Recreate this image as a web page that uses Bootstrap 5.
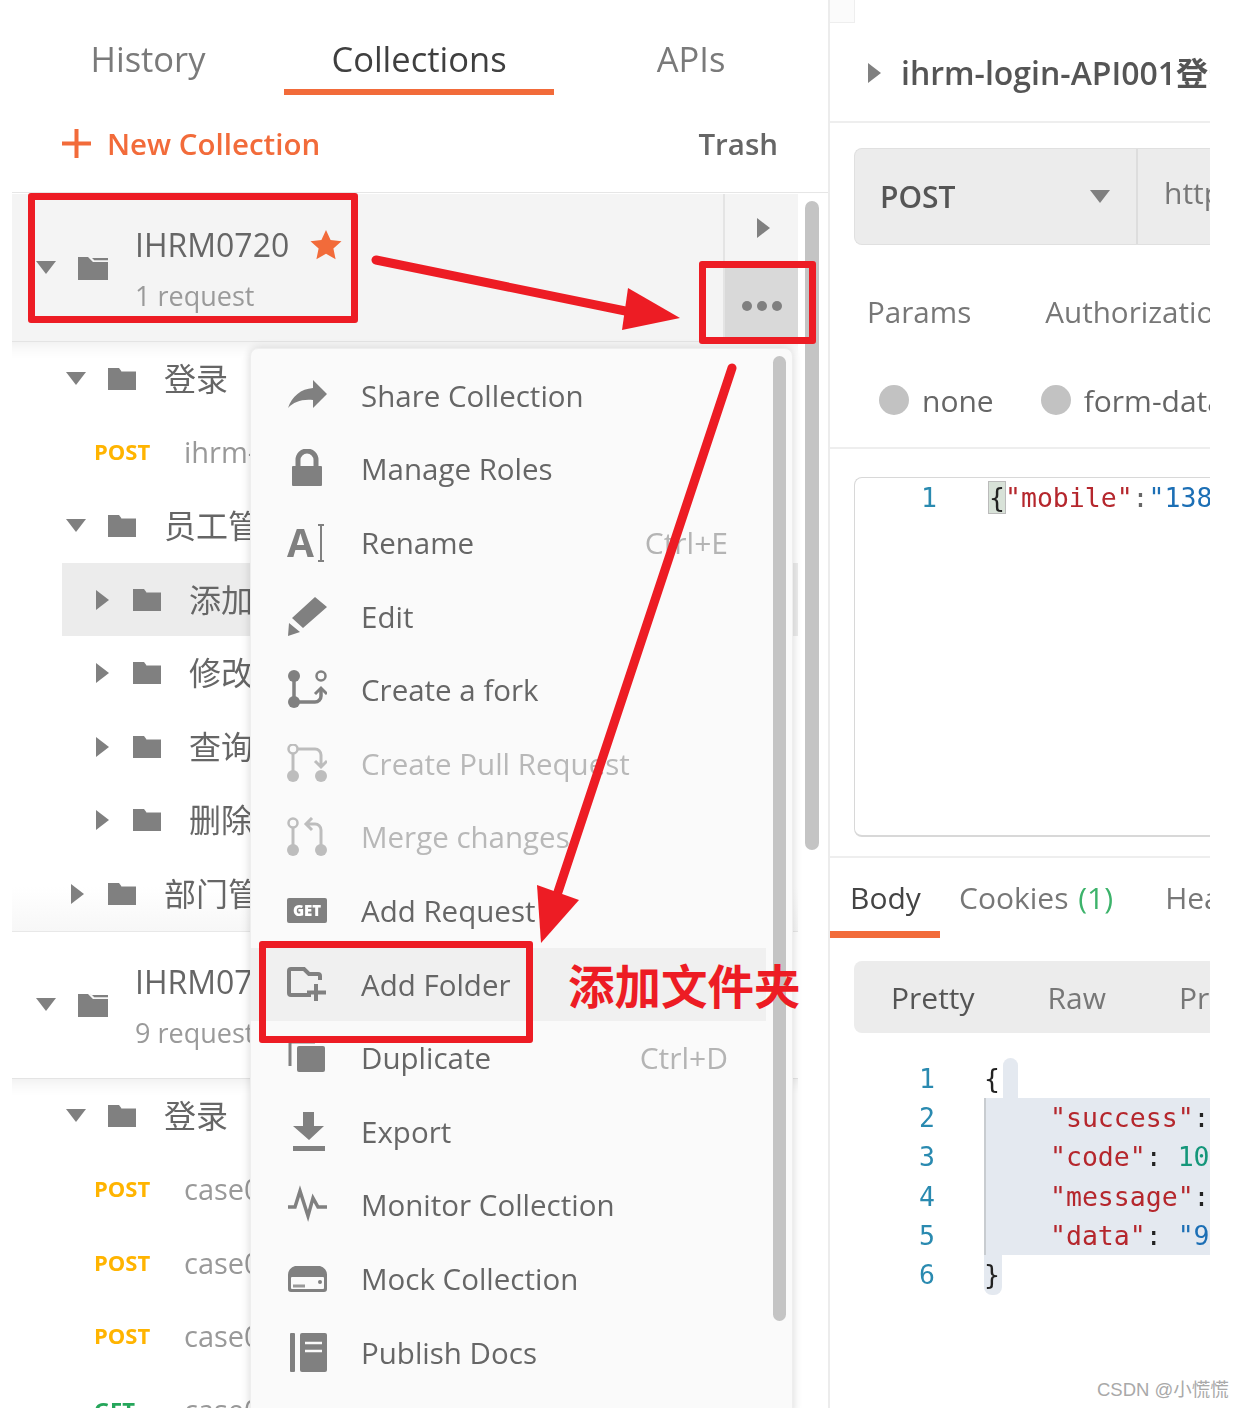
<!DOCTYPE html>
<html lang="en"><head><meta charset="utf-8"><title>Postman</title>
<link href="https://cdn.jsdelivr.net/npm/bootstrap@5.3.0/dist/css/bootstrap.min.css" rel="stylesheet">
<style>
html,body{margin:0;height:1408px;overflow:hidden;background:#fff}
body{font-family:"Open Sans","Noto Sans CJK SC",sans-serif;color:#666;position:relative;width:1244px}
.shell{height:1408px;width:1244px;filter:blur(.45px)}
svg{flex:none}
.side{width:830px;height:1408px;border-right:2px solid #ececec;position:relative;overflow:hidden;flex:none}
.stab{font-size:34.500px;line-height:45px;color:#7a7a7a;padding-top:36px;height:95px;text-align:center;flex:none}
.stab.h{width:284px;padding-left:12px}
.stab.c{width:270px;color:#3f3f3f;border-bottom:6px solid #f26b3a}
.stab.a{width:274px}
.bar{height:98px;padding:0 50px 0 50px;margin-left:12px;border-bottom:1px solid #e6e6e6}
.newc{color:#f26b3a;font-weight:600;font-size:29.500px;line-height:40px}
.trash{color:#666;font-weight:600;font-size:29.500px;line-height:40px}
.tree{margin:1px 0 0 12px;width:786px}
.coll{height:148px;position:relative;border-top:1px solid #e8e8e8;border-bottom:1px solid #e4e4e4;padding-left:24px;align-items:center}
.coll.on{background:#f4f4f4;border-top:0;height:148px}
.cname{font-size:32px;line-height:42px;color:#666}
.csub{font-size:27px;line-height:36px;color:#9a9a9a;margin-top:12px}
.ctext{margin-left:27px;padding-top:2px}
.fic{margin-left:22px}
.star{margin-left:21px}
.cact{position:absolute;right:0;top:0;bottom:0;width:75px;border-left:2px solid #e4e4e4}
.cact1{height:68px;padding-left:3px}
.cact2{height:80px;background:#d9d9d9;padding-top:8px}
.row1{height:73.6px;position:relative;align-items:center;padding-left:54px}
.row1.lv2{padding-left:84px}
.row1.lv1c{padding-left:59px}
.row1.req{padding-left:82px}
.row1.sel{background:#ececec;margin-left:50px;padding-left:34px}
.glow{box-shadow:inset 0 22px 16px -18px rgba(0,0,0,.07)}
.fadeb{background:linear-gradient(to bottom,#fff 40%,#f7f7f7 100%)}
.ml1{margin-left:21px}
.ml2{margin-left:23px}
.tlabel{font-size:32px;line-height:40px;color:#666;margin-left:27px;white-space:nowrap}
.meth{font-size:22px;line-height:30px;font-weight:700;color:#ffb400;width:90px;flex:none;margin-bottom:2px}
.meth.g{color:#26a65b}
.rname{font-size:29px;line-height:40px;color:#999;white-space:nowrap}
.scroll1{position:absolute;left:805px;top:201px;width:14px;height:649px;background:#c4c4c4;border-radius:7px}
.pop.dropdown-menu{position:absolute;left:250px;top:348px;width:543px;height:1070px;background:#fafafa;border:1px solid #eee;border-radius:8px;padding:10px 0 0;margin:0;box-shadow:0 0 10px rgba(0,0,0,.16);color:#666;display:block;z-index:5}
.pop .dropdown-item{height:73.6px;padding:0 38px 0 36px;margin:0;color:#666;font-size:29.500px;line-height:40px;width:515px;background:none}
.pop .dropdown-item.hov{background:#f0f0f0}
.pop .dropdown-item.off{color:#b8b8b8}
.pop .ico{width:40px;height:40px;flex:none;margin-right:34px}
.pop .sk{margin-left:auto;color:#b4b4b4;font-size:30px}
.scroll2{position:absolute;left:522px;top:7px;width:13px;height:965px;background:#c4c4c4;border-radius:7px}
.main{width:380px;height:1408px;overflow:hidden;flex:none;position:relative}
.stub{height:23px;width:25px;border:1px solid #eee;border-width:0 1px 1px 0;background:#fbfbfb}
.titlebar{height:100px;border-bottom:2px solid #eee;padding:1px 0 0 38px;white-space:nowrap}
.ttl{font-size:32px;font-weight:600;color:#555;line-height:44px;margin-left:20px}
.urlwrap{padding:25px 0 0 24px;height:123px}
.urlb{height:97px;background:#ececec;border:1px solid #e0e0e0;border-right:0;border-radius:8px 0 0 8px;white-space:nowrap;font-size:30px}
.mth{width:283px;flex:none;padding:0 26px 0 25px;font-weight:600;color:#555;border-right:2px solid #ddd;height:100%}
.urlt{padding:0 0 8px 26px;color:#777}
.ptabs{height:79px;margin-top:31px;padding:0 0 8px 37px;font-size:29.600px;white-space:nowrap;color:#777}
.ptabs span+span{margin-left:74px}
.radios{height:90px;margin-top:3px;padding:0 0 6px 49px;font-size:30px;white-space:nowrap;color:#666;border-bottom:2px solid #eee;margin-bottom:28px}
.rad{width:30px;height:30px;background:#c2c2c2;border-radius:50%;flex:none;margin-right:13px}
.rlab+.rad{margin-left:47px}
.editor{margin-left:24px;height:360px;border:1px solid #d8d8d8;border-right:0;border-radius:8px 0 0 8px;border-bottom-width:2px}
.mono{font-family:"DejaVu Sans Mono","Liberation Mono",monospace;font-size:26.500px;line-height:39.400px;white-space:nowrap;overflow:hidden}
.ln{color:#2a8ab0;width:106px;text-align:right;flex:none;padding-right:24px}
.brace{background:#d8e2d8;outline:1px solid #bbb;color:#222;margin-left:4px}
.str{color:#b5272d}
.blue{color:#1c6fb5}
.num{color:#14967a}
.rtabs{height:80px;margin-top:19px;border-top:2px solid #eee;font-size:30px;white-space:nowrap;color:#777}
.rtab{padding:18px 19px 0;height:80px;line-height:44px}
.rtab.act{color:#444;border-bottom:7px solid #f26b3a;width:110px;padding:18px 0 0 20px;flex:none}
.rtab+.rtab+.rtab{margin-left:14px}
.green{color:#3db36b;margin-left:2px}
.pbar{margin:25px 0 0 24px;height:72px;background:#ececec;border-radius:8px 0 0 8px;padding-left:37px;font-size:30px;white-space:nowrap;color:#777}
.pbar .first{color:#555;margin-right:73px}
.pbar .sec{margin-right:73px}
.code{padding-top:25.500px;position:relative}
.cl{height:39.400px;position:relative;z-index:1;color:#222}
.cl .ln{width:105px;padding-right:0;margin-right:49px}
.pad{padding-left:66px}
.hl{position:absolute;background:#e4e9f0;z-index:0}
.h1{left:154px;right:0;top:65px;height:157px;border-left:2px solid #c8ccd0}
.h2{left:173px;width:15px;top:25px;height:40px;border-radius:8px 8px 0 0}
.h3{left:154px;width:18px;top:222px;height:40px;border-radius:0 0 8px 8px}
.wm{position:absolute;left:1097px;top:1377px;font-size:18.500px;line-height:26px;color:#a9a9a9;font-family:"Liberation Sans","Noto Sans CJK SC",sans-serif;z-index:9;white-space:nowrap}
.rbox{position:absolute;border:7px solid #ed1c24;border-radius:3px;z-index:8;pointer-events:none}
.b1{left:28px;top:193px;width:330px;height:130px}
.b2{left:699px;top:261px;width:117px;height:83px}
.b3{left:259px;top:941px;width:274px;height:102px}
.arrows{position:absolute;left:0;top:0;z-index:8;pointer-events:none}
.note{position:absolute;left:568px;top:953px;font-size:46.500px;line-height:62px;font-weight:700;color:#ed1c24;z-index:8;white-space:nowrap;font-family:"Noto Sans CJK SC",sans-serif}
</style></head>
<body>
<svg width="0" height="0" class="position-absolute">
<defs>
<symbol id="fo" viewBox="0 0 30 24"><path d="M1 1h11l3 4h14v18H1z" fill="#808080"/><path d="M15 5h14" stroke="#808080"/></symbol>
<symbol id="fopen" viewBox="0 0 30 24"><path d="M0 1h10l5 5h15v18H0z" fill="#808080"/><path d="M13 2h17v3H16z" fill="#808080"/><path d="M12 1l4 4h14" fill="none" stroke="#f4f4f4" stroke-width="1.5"/></symbol>
<symbol id="cd" viewBox="0 0 20 13"><path d="M0 0h20L10 13z" fill="#808080"/></symbol>
<symbol id="cr" viewBox="0 0 13 20"><path d="M0 0l13 10L0 20z" fill="#808080"/></symbol>
</defs>
</svg>
<div class="shell d-flex">
<aside class="side">
  <div class="d-flex">
    <div class="stab h">History</div>
    <div class="stab c">Collections</div>
    <div class="stab a">APIs</div>
  </div>
  <div class="bar d-flex align-items-center justify-content-between">
    <div class="newc d-flex align-items-center gap-3">
      <svg width="29" height="31" viewBox="0 0 29 31"><path d="M14.500 1v29M0 15.500h29" stroke="#f26b3a" stroke-width="4"/></svg><span>New Collection</span></div>
    <div class="trash">Trash</div>
  </div>
  <div class="tree">
    <div class="coll on d-flex">
      <svg width="20" height="13"><use href="#cd"/></svg>
      <svg width="30" height="24" class="fic"><use href="#fopen"/></svg>
      <div class="ctext"><div class="cname d-flex align-items-center">IHRM0720
        <svg width="32" height="32" viewBox="0 0 32 32" class="star"><path d="M16 1l4.600 10 10.900 1.200-8.100 7.300 2.200 10.700L16 24.700l-9.600 5.500 2.200-10.700L.5 12.200 11.400 11z" fill="#f26b3a"/></svg></div>
        <div class="csub">1 request</div></div>
      <div class="cact">
        <div class="cact1 d-flex align-items-center justify-content-center"><svg width="13" height="20"><use href="#cr"/></svg></div>
        <div class="cact2 d-flex align-items-center justify-content-center"><svg width="40" height="12" viewBox="0 0 40 12"><circle cx="5" cy="6" r="5" fill="#808080"/><circle cx="20" cy="6" r="5" fill="#808080"/><circle cx="35" cy="6" r="5" fill="#808080"/></svg></div>
      </div>
    </div>
    <div class="row1 glow d-flex"><svg width="20" height="13"><use href="#cd"/></svg><svg width="30" height="24" class="ml1"><use href="#fo"/></svg><span class="tlabel">登录</span></div>
    <div class="row1 req d-flex"><span class="meth">POST</span><span class="rname">ihrm-login</span></div>
    <div class="row1 d-flex"><svg width="20" height="13"><use href="#cd"/></svg><svg width="30" height="24" class="ml1"><use href="#fo"/></svg><span class="tlabel">员工管理</span></div>
    <div class="row1 lv2 sel d-flex"><svg width="13" height="20"><use href="#cr"/></svg><svg width="30" height="24" class="ml2"><use href="#fo"/></svg><span class="tlabel">添加员工</span></div>
    <div class="row1 lv2 d-flex"><svg width="13" height="20"><use href="#cr"/></svg><svg width="30" height="24" class="ml2"><use href="#fo"/></svg><span class="tlabel">修改员工</span></div>
    <div class="row1 lv2 d-flex"><svg width="13" height="20"><use href="#cr"/></svg><svg width="30" height="24" class="ml2"><use href="#fo"/></svg><span class="tlabel">查询员工</span></div>
    <div class="row1 lv2 d-flex"><svg width="13" height="20"><use href="#cr"/></svg><svg width="30" height="24" class="ml2"><use href="#fo"/></svg><span class="tlabel">删除员工</span></div>
    <div class="row1 lv1c fadeb d-flex"><svg width="13" height="20"><use href="#cr"/></svg><svg width="30" height="24" class="ml2"><use href="#fo"/></svg><span class="tlabel">部门管理</span></div>
    <div class="coll d-flex">
      <svg width="20" height="13"><use href="#cd"/></svg>
      <svg width="30" height="24" class="fic"><use href="#fopen"/></svg>
      <div class="ctext"><div class="cname">IHRM0719</div><div class="csub">9 requests</div></div>
    </div>
    <div class="row1 glow d-flex"><svg width="20" height="13"><use href="#cd"/></svg><svg width="30" height="24" class="ml1"><use href="#fo"/></svg><span class="tlabel">登录</span></div>
    <div class="row1 req d-flex"><span class="meth">POST</span><span class="rname">case01</span></div>
    <div class="row1 req d-flex"><span class="meth">POST</span><span class="rname">case02</span></div>
    <div class="row1 req d-flex"><span class="meth">POST</span><span class="rname">case03</span></div>
    <div class="row1 req d-flex"><span class="meth g">GET</span><span class="rname">case04</span></div>
  </div>
  <div class="scroll1"></div>

  <ul class="pop dropdown-menu show list-unstyled">
    <li><div class="dropdown-item d-flex align-items-center"><svg class="ico" viewBox="0 0 40 40"><path d="M26 4L40 18 26 32V24C14 23 7 26 1 32 5 20 14 13 26 12z" fill="#808080"/></svg>Share Collection</div></li>
    <li><div class="dropdown-item d-flex align-items-center"><svg class="ico" viewBox="0 0 40 40"><rect x="5" y="17" width="30" height="20" rx="1" fill="#808080"/><path d="M11 18v-7a9 9 0 0 1 18 0v7" fill="none" stroke="#808080" stroke-width="5"/></svg>Manage Roles</div></li>
    <li><div class="dropdown-item d-flex align-items-center"><svg class="ico" viewBox="0 0 40 40"><text x="0" y="34" font-family="Open Sans" font-weight="700" font-size="39" fill="#808080">A</text><path d="M31 2h6M34 2v36M31 38h6" stroke="#808080" stroke-width="2" fill="none"/></svg>Rename<span class="sk">Ctrl+E</span></div></li>
    <li><div class="dropdown-item d-flex align-items-center"><svg class="ico" viewBox="0 0 40 40"><path d="M28 0l12 10-24 21-11-10zM2 26l11 9-12 4z" fill="#808080"/></svg>Edit</div></li>
    <li><div class="dropdown-item d-flex align-items-center"><svg class="ico" viewBox="0 0 40 40"><g fill="#808080"><circle cx="7" cy="6" r="6"/><circle cx="7" cy="32" r="6"/></g><path d="M7 6v26h21a6 6 0 0 0 6-6v-6" fill="none" stroke="#808080" stroke-width="3.500"/><path d="M28 24l6-6 6 6" fill="none" stroke="#808080" stroke-width="3"/><circle cx="34" cy="6" r="4.500" fill="none" stroke="#808080" stroke-width="2.500"/></svg>Create a fork</div></li>
    <li><div class="dropdown-item off d-flex align-items-center"><svg class="ico" viewBox="0 0 40 40"><g fill="#bdbdbd"><circle cx="6" cy="32" r="6"/><circle cx="34" cy="32" r="6"/></g><path d="M6 9v22M11 5h17a6 6 0 0 1 6 6v11M28 17l6 6 6-6" fill="none" stroke="#bdbdbd" stroke-width="3"/><circle cx="6" cy="5" r="4.500" fill="none" stroke="#bdbdbd" stroke-width="2.500"/></svg>Create Pull Request</div></li>
    <li><div class="dropdown-item off d-flex align-items-center"><svg class="ico" viewBox="0 0 40 40"><g fill="#bdbdbd"><circle cx="6" cy="33" r="6"/><circle cx="34" cy="33" r="6"/></g><path d="M6 11v22M34 33V13a6 6 0 0 0-6-6h-8M25 1l-6 6 6 6" fill="none" stroke="#bdbdbd" stroke-width="3"/><circle cx="6" cy="6" r="4.500" fill="none" stroke="#bdbdbd" stroke-width="2.500"/></svg>Merge changes</div></li>
    <li><div class="dropdown-item d-flex align-items-center"><svg class="ico" viewBox="0 0 40 40"><rect y="7" width="40" height="25" rx="2" fill="#808080"/><text x="20" y="25" text-anchor="middle" font-family="Open Sans" font-weight="800" font-size="15" fill="#fff">GET</text></svg>Add Request</div></li>
    <li><div class="dropdown-item hov d-flex align-items-center"><svg class="ico" viewBox="0 0 40 40"><path d="M24 30H4a2 2 0 0 1-2-2V6a2 2 0 0 1 2-2h13l5 5h9a2 2 0 0 1 2 2v4" fill="none" stroke="#808080" stroke-width="4"/><path d="M29 19v17M20 27.500h19" stroke="#808080" stroke-width="4"/></svg>Add Folder</div></li>
    <li><div class="dropdown-item d-flex align-items-center"><svg class="ico" viewBox="0 0 40 40"><path d="M3 28V4h25" fill="none" stroke="#808080" stroke-width="3"/><rect x="10" y="8" width="28" height="26" rx="2" fill="#808080"/></svg>Duplicate<span class="sk">Ctrl+D</span></div></li>
    <li><div class="dropdown-item d-flex align-items-center"><svg class="ico" viewBox="0 0 40 40"><path d="M16 0h11v14h10L22 28 6 14h10zM6 34h32v5H6z" fill="#808080"/></svg>Export</div></li>
    <li><div class="dropdown-item d-flex align-items-center"><svg class="ico" viewBox="0 0 40 40"><path d="M1 22h7l5-16 8 25 5-18 5 9h9" fill="none" stroke="#808080" stroke-width="3.500"/></svg>Monitor Collection</div></li>
    <li><div class="dropdown-item d-flex align-items-center"><svg class="ico" viewBox="0 0 40 40"><path d="M1 16a9 9 0 0 1 7-9h25a9 9 0 0 1 7 9v14a3 3 0 0 1-3 3H4a3 3 0 0 1-3-3z" fill="#808080"/><rect x="4" y="18" width="33" height="12" rx="1" fill="#fafafa"/><path d="M6 27h12" stroke="#999" stroke-width="3"/><circle cx="33" cy="23" r="2" fill="#808080"/></svg>Mock Collection</div></li>
    <li><div class="dropdown-item d-flex align-items-center"><svg class="ico" viewBox="0 0 40 40"><rect x="3" y="0" width="5" height="39" rx="1" fill="#808080"/><rect x="13" y="0" width="27" height="39" rx="2" fill="#808080"/><path d="M18 10h17M18 18h17" stroke="#fafafa" stroke-width="2.500"/></svg>Publish Docs</div></li>
    <li class="scroll2"></li>
  </ul>
</aside>

<main class="main">
  <div class="stub"></div>
  <div class="titlebar d-flex align-items-center">
    <svg width="13" height="20"><use href="#cr"/></svg><span class="ttl">ihrm-login-API001登录</span>
  </div>
  <div class="urlwrap">
    <div class="urlb d-flex align-items-center">
      <div class="mth d-flex align-items-center justify-content-between"><span>POST</span><svg width="20" height="13"><use href="#cd"/></svg></div>
      <div class="urlt">http://ihrm-test.itheima.net/api/sys/login</div>
    </div>
  </div>
  <div class="ptabs d-flex align-items-center"><span>Params</span><span>Authorization</span></div>
  <div class="radios d-flex align-items-center"><span class="rad"></span><span class="rlab">none</span><span class="rad"></span><span class="rlab">form-data</span></div>
  <div class="editor">
    <div class="mono d-flex"><div class="ln">1</div><div class="ms-4"><span class="brace">{</span><span class="str">"mobile"</span>:<span class="blue">"13800000002"</span></div></div>
  </div>
  <div class="rtabs d-flex">
    <div class="rtab act">Body</div>
    <div class="rtab">Cookies <span class="green">(1)</span></div>
    <div class="rtab">Headers</div>
  </div>
  <div class="pbar d-flex align-items-center"><span class="first">Pretty</span><span class="sec">Raw</span><span>Preview</span></div>
  <div class="code mono">
    <div class="hl h1"></div><div class="hl h2"></div><div class="hl h3"></div>
    <div class="cl d-flex"><div class="ln">1</div><div>{</div></div>
    <div class="cl d-flex"><div class="ln">2</div><div class="pad"><span class="str">"success"</span>: <span class="blue">true</span>,</div></div>
    <div class="cl d-flex"><div class="ln">3</div><div class="pad"><span class="str">"code"</span>: <span class="num">10000</span>,</div></div>
    <div class="cl d-flex"><div class="ln">4</div><div class="pad"><span class="str">"message"</span>: <span class="blue">"操作成功"</span>,</div></div>
    <div class="cl d-flex"><div class="ln">5</div><div class="pad"><span class="str">"data"</span>: <span class="blue">"9a0c"</span></div></div>
    <div class="cl d-flex"><div class="ln">6</div><div>}</div></div>
  </div>
</main>
</div>

<div class="rbox b1"></div>
<div class="rbox b2"></div>
<div class="rbox b3"></div>
<svg class="arrows" width="1244" height="1408" viewBox="0 0 1244 1408">
  <path d="M376 260L640 314" stroke="#ed1c24" stroke-width="9" stroke-linecap="round"/>
  <path d="M680 318L628 288 622 330z" fill="#ed1c24"/>
  <path d="M732 368L558 892" stroke="#ed1c24" stroke-width="9" stroke-linecap="round"/>
  <path d="M541 943L537 885 579 900z" fill="#ed1c24"/>
</svg>
<div class="note">添加文件夹</div>
<div class="wm">CSDN @小慌慌</div>
</body></html>
